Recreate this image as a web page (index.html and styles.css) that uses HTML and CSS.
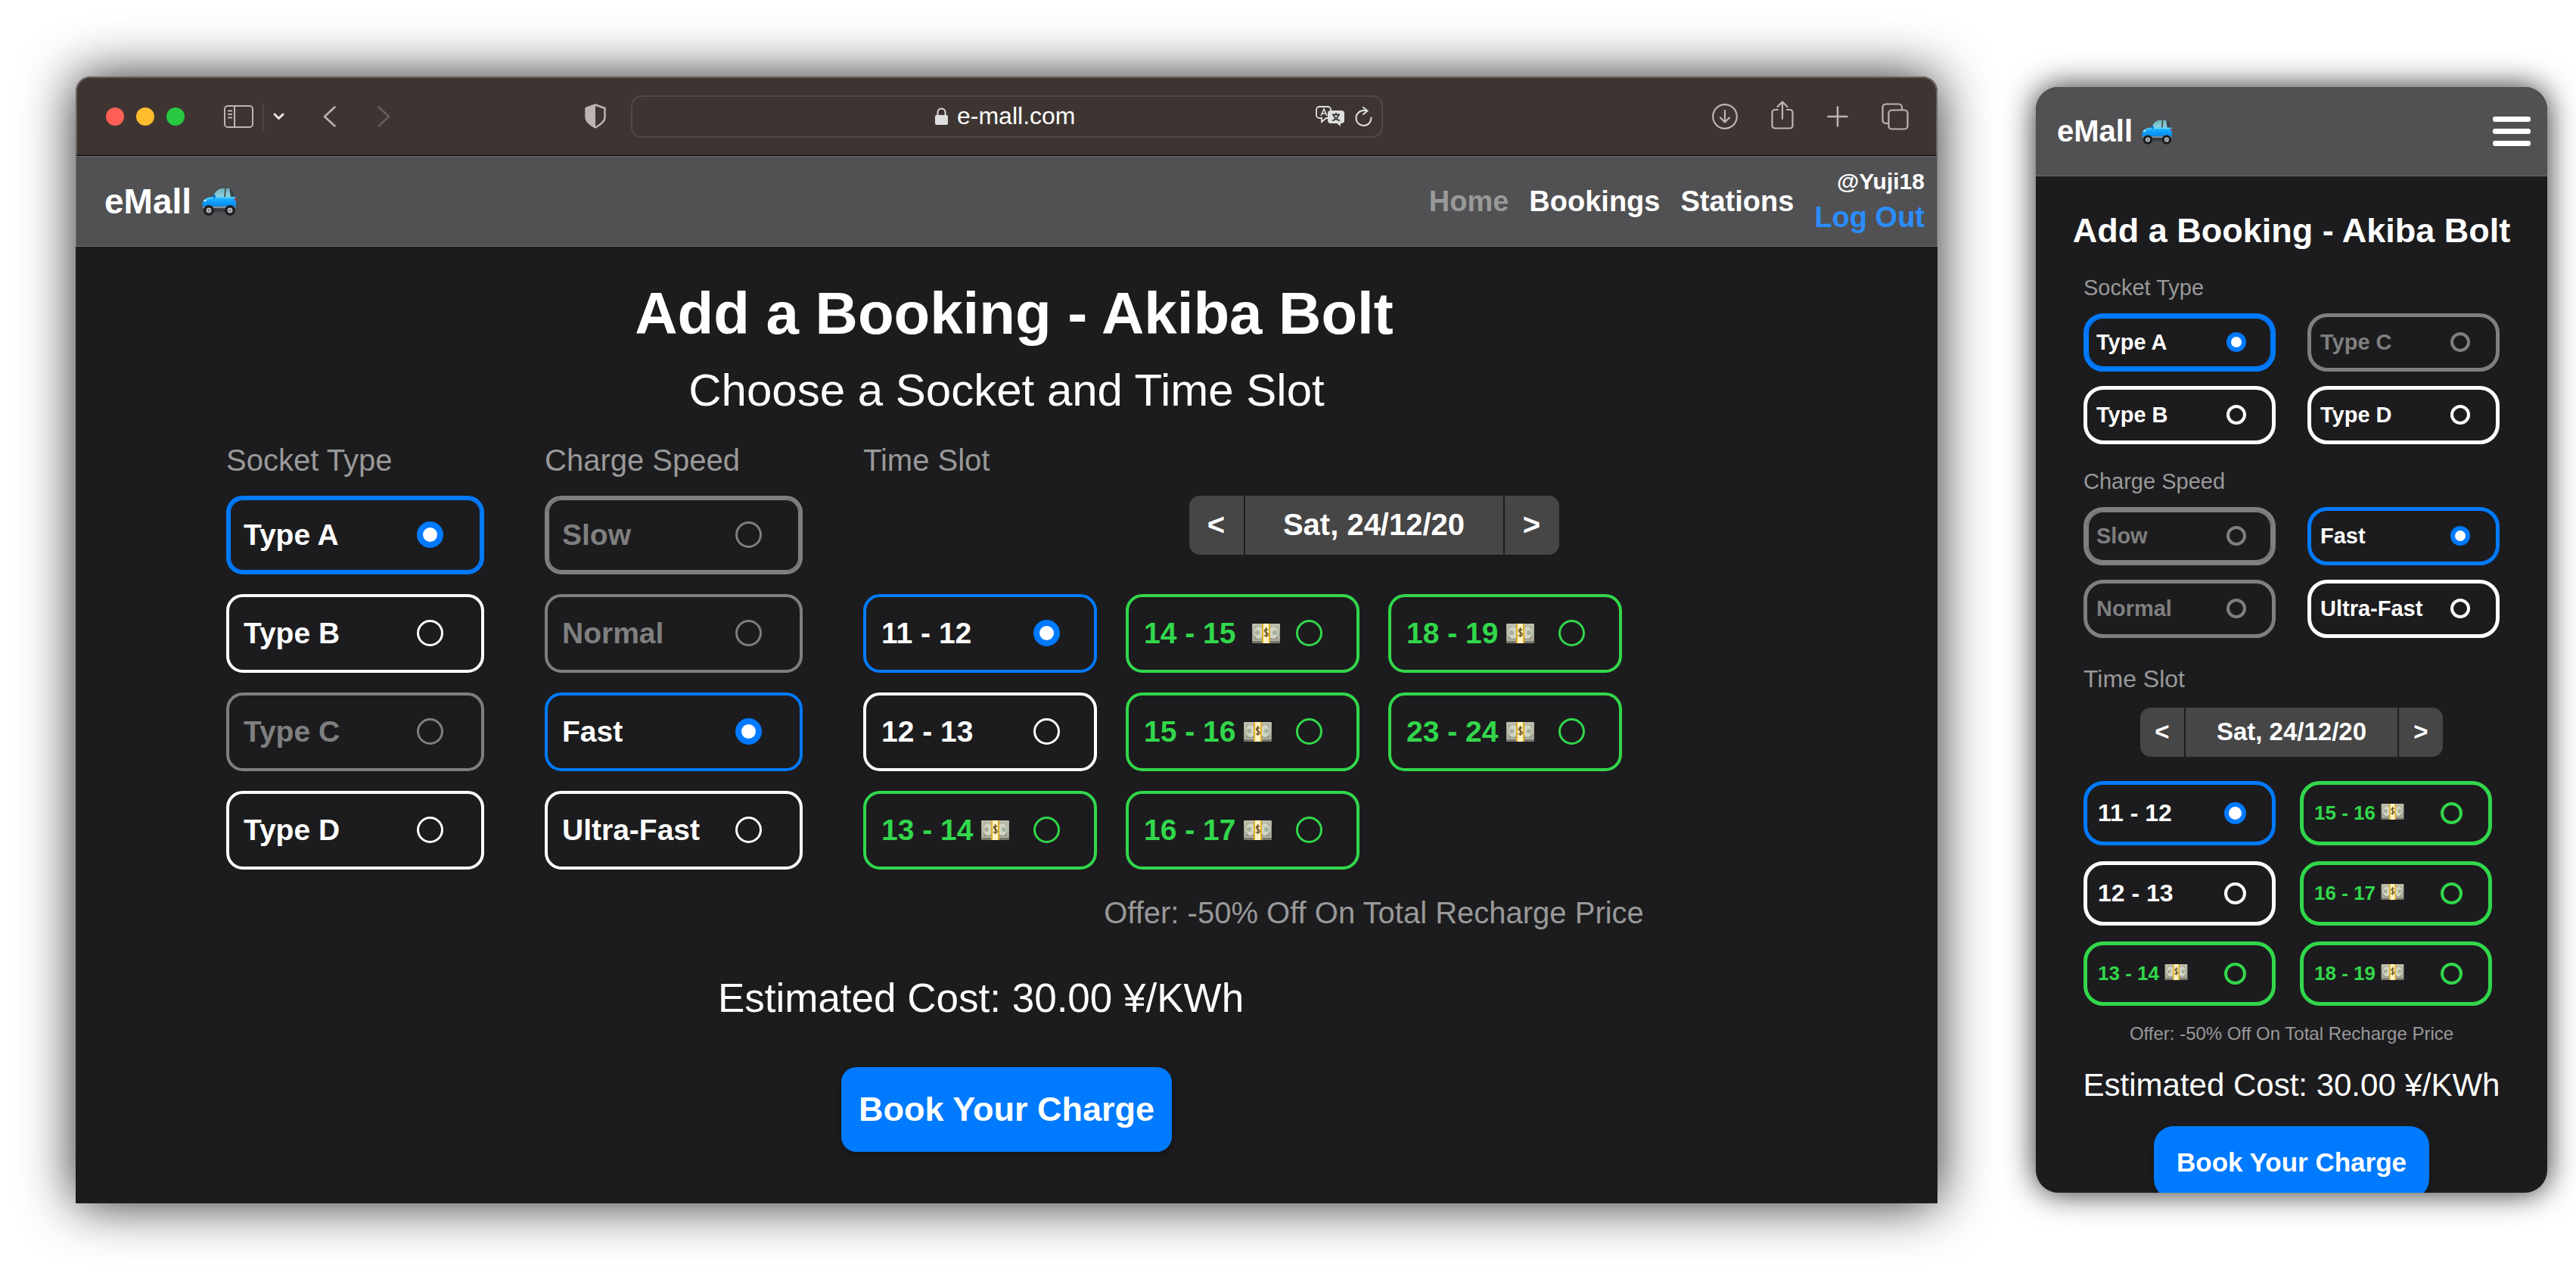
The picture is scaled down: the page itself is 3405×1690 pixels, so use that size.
FILE: index.html
```html
<!DOCTYPE html>
<html lang="en">
<head>
<meta charset="utf-8">
<title>eMall - Add a Booking</title>
<meta name="viewport" content="width=device-width, initial-scale=1">
<link rel="stylesheet" href="styles.css">
</head>
<body>
<svg class="sprite" aria-hidden="true">
  <defs>
    <linearGradient id="paint" x1="0" y1="0" x2="0" y2="1">
      <stop offset="0" stop-color="#2cbcff"/><stop offset="0.5" stop-color="#0a9dff"/><stop offset="1" stop-color="#1683d8"/>
    </linearGradient>
    <linearGradient id="glass" x1="0" y1="0" x2="0" y2="1">
      <stop offset="0" stop-color="#6fb4c0"/><stop offset="1" stop-color="#8fd6e0"/>
    </linearGradient>
    <linearGradient id="bill" x1="0" y1="0" x2="0" y2="1">
      <stop offset="0" stop-color="#b5b5a5"/><stop offset="1" stop-color="#8d8d80"/>
    </linearGradient>
  </defs>
  <symbol id="car" viewBox="0 0 45 39">
    <path d="M3 28h40l1 6H1z" fill="#3a3d40"/>
    <path d="M11 16C15 8 19 1 27 1h9c5 0 7 5 8 14z" fill="#4b4f53"/>
    <path d="M14 15C17 8 21 3 27 3h3l-1 12z" fill="url(#glass)"/>
    <path d="M32 3h4l2 12h-7z" fill="url(#glass)"/>
    <path d="M38 4c2 2 3 6 3 10h-2z" fill="#2c3b44"/>
    <path d="M1 21c1-4 6-6 12-7h30c2 0 2 2 2 4v10H1c-1-2-1-5 0-7z" fill="url(#paint)"/>
    <path d="M3 20c1-3 5-4 11-5h28" fill="none" stroke="#7fdcff"/>
    <rect x="14" y="11" width="4" height="5" rx="2" fill="#0a78d0"/>
    <ellipse cx="4" cy="19" rx="2" ry="1" fill="#e9f8ff"/>
    <rect x="43" y="16" width="2" height="3" fill="#d8232e"/>
    <path d="M1 28h43" stroke="#8a9096" stroke-width="2"/>
    <circle cx="9" cy="32" r="7" fill="#1d1e20"/><circle cx="9" cy="32" r="3.4" fill="#b9bbbd"/><circle cx="9" cy="32" r="1.4" fill="#6b6e70"/>
    <circle cx="37" cy="32" r="7" fill="#1d1e20"/><circle cx="37" cy="32" r="3.4" fill="#b9bbbd"/><circle cx="37" cy="32" r="1.4" fill="#6b6e70"/>
  </symbol>
  <symbol id="cash" viewBox="0 0 37 26">
    <rect width="37" height="26" rx="1" fill="url(#bill)"/>
    <rect x="2" y="2" width="33" height="20" fill="none" stroke="#cfcfbf"/>
    <ellipse cx="9" cy="12" rx="6" ry="8" fill="#d3d5c2"/><ellipse cx="28" cy="12" rx="6" ry="8" fill="#d3d5c2"/>
    <circle cx="7" cy="12" r="3" fill="#a9ad9a"/><circle cx="30" cy="12" r="3" fill="#9fb19a"/>
    <path d="M0 23h37v3H0z" fill="#77776c"/>
    <path d="M13 0h11v26H13z" fill="#fff3c4"/>
    <path d="M13 0h2v26h-2zM22 0h2v26h-2z" fill="#e0b02c"/>
    <path d="M21 8.500c-1-1.500-4.500-1.500-4.500 1 0 2.800 4.500 1.800 4.500 4.700 0 2.600-4 2.600-5 .8M18.600 5v13" fill="none" stroke="#6a5424" stroke-width="1.500"/>
  </symbol>
</svg>

<main class="stage">
  <section class="browser" aria-label="Desktop">
    <div class="toolbar">
      <div class="tools tools-left">
        <div class="lights"><span class="light red"></span><span class="light amber"></span><span class="light green"></span></div>
        <div class="side">
          <svg width="39" height="30" viewBox="0 0 39 30" fill="none" stroke="#bfb4b1" stroke-width="2"><rect x="1" y="1" width="37" height="28" rx="4"/><path d="M14 1v28M5 7.500h6M5 12h6M5 16.500h6"/></svg>
          <span class="rule"></span>
          <svg width="15" height="10" viewBox="0 0 15 10" fill="none" stroke="#eee6e4" stroke-width="3" stroke-linecap="round" stroke-linejoin="round"><path d="M2 2l5.500 5.500L13 2"/></svg>
        </div>
        <div class="history">
          <svg width="17" height="28" viewBox="0 0 17 28" fill="none" stroke="#bfb4b1" stroke-width="2.500" stroke-linecap="round" stroke-linejoin="round"><path d="M15.500 1.500L2 14l13.500 12.500"/></svg>
          <svg width="17" height="28" viewBox="0 0 17 28" fill="none" stroke="#675d5a" stroke-width="2.500" stroke-linecap="round" stroke-linejoin="round"><path d="M1.500 1.500L15 14 1.500 26.500"/></svg>
        </div>
        <svg class="shield" width="28" height="33" viewBox="0 0 28 33"><path d="M14 1.500L26.500 6v12c0 6-6 10-12.500 13.500C7.500 28 1.500 24 1.500 18V6z" fill="none" stroke="#bfb4b1" stroke-width="2.500" stroke-linejoin="round"/><path d="M14 1v31C7 28 1 24 1 18V6z" fill="#bfb4b1"/></svg>
      </div>
      <div class="address">
        <span></span>
        <div class="location">
          <svg width="17" height="23" viewBox="0 0 17 23"><rect y="10" width="17" height="13" rx="2" fill="#dedede"/><path d="M3.500 11V6.500a5 5 0 0 1 10 0V11" fill="none" stroke="#dedede" stroke-width="2"/></svg>
          <input class="url" type="text" value="e-mall.com" aria-label="Address">
        </div>
        <div class="page-tools">
          <svg width="38" height="27" viewBox="0 0 38 27"><path d="M17 16h-3l-6 5v-5H5a4 4 0 0 1-4-4V5a4 4 0 0 1 4-4h11a4 4 0 0 1 4 4v3" fill="none" stroke="#dedede" stroke-width="1.800"/><path d="M7 13l4-9 4 9M8.500 10h5" fill="none" stroke="#dedede" stroke-width="1.600"/><path d="M20 6h14a4 4 0 0 1 4 4v9a4 4 0 0 1-4 4h-1v4l-5-4h-8a4 4 0 0 1-4-4v-9a4 4 0 0 1 4-4z" fill="#dedede"/><path d="M22 11.500h10M27 9v2.500M30.500 11.500c-1 4-4 6.500-8.500 8M23.500 11.500c1 4 4 6.500 8.500 8" fill="none" stroke="#3e3532" stroke-width="1.800"/></svg>
          <svg width="23" height="26" viewBox="0 0 23 26" fill="none" stroke="#dedede" stroke-width="2" stroke-linecap="round"><path d="M21.500 14.500A10 10 0 1 1 11.500 5h4.500M11 1l5.500 4.500L11 10"/></svg>
        </div>
      </div>
      <div class="tools tools-right">
        <svg width="34" height="34" viewBox="0 0 34 34" fill="none" stroke="#bfb4b1" stroke-width="2.200" stroke-linecap="round" stroke-linejoin="round"><circle cx="17" cy="17" r="15.800"/><path d="M17 9v15M11 18.500l6 6 6-6"/></svg>
        <svg class="share" width="30" height="38" viewBox="0 0 30 38" fill="none" stroke="#bfb4b1" stroke-width="2.200" stroke-linecap="round" stroke-linejoin="round"><path d="M9 12H5a3.500 3.500 0 0 0-3.500 3.500V33A3.500 3.500 0 0 0 5 36.500h20a3.500 3.500 0 0 0 3.500-3.500V15.500A3.500 3.500 0 0 0 25 12h-4M15 24V2M8.500 8L15 1.500 21.500 8"/></svg>
        <svg width="28" height="28" viewBox="0 0 28 28" fill="none" stroke="#bfb4b1" stroke-width="2.500" stroke-linecap="round"><path d="M14 1.500v25M1.500 14h25"/></svg>
        <svg width="36" height="36" viewBox="0 0 36 36" fill="none" stroke="#bfb4b1" stroke-width="2.200"><rect x="9.500" y="9.500" width="25" height="25" rx="4"/><path d="M9.500 27H6a4.500 4.500 0 0 1-4.500-4.500V6A4.500 4.500 0 0 1 6 1.500h16.500A4.500 4.500 0 0 1 27 6v3.500"/></svg>
      </div>
    </div>

    <header class="site-header">
      <a class="brand" href="#">eMall <svg class="car"><use href="#car"/></svg></a>
      <nav class="nav">
        <a class="current" href="#">Home</a>
        <a href="#">Bookings</a>
        <a href="#">Stations</a>
        <div class="user"><span class="handle">@Yuji18</span><a class="logout" href="#">Log Out</a></div>
      </nav>
    </header>

    <form class="booking">
      <h1 class="title">Add a Booking - Akiba Bolt</h1>
      <p class="subtitle">Choose a Socket and Time Slot</p>
      <div class="choices">
        <fieldset class="group">
          <legend>Socket Type</legend>
          <div class="stack">
            <label class="option picked thick">Type A<input type="radio" name="socket" checked></label>
            <label class="option">Type B<input type="radio" name="socket"></label>
            <label class="option off">Type C<input type="radio" name="socket" disabled></label>
            <label class="option">Type D<input type="radio" name="socket"></label>
          </div>
        </fieldset>
        <fieldset class="group">
          <legend>Charge Speed</legend>
          <div class="stack">
            <label class="option off thick">Slow<input type="radio" name="speed" disabled></label>
            <label class="option off">Normal<input type="radio" name="speed" disabled></label>
            <label class="option picked">Fast<input type="radio" name="speed" checked></label>
            <label class="option">Ultra-Fast<input type="radio" name="speed"></label>
          </div>
        </fieldset>
        <fieldset class="group">
          <legend>Time Slot</legend>
          <div class="picker">
            <button type="button" aria-label="Previous day">&lt;</button><output>Sat, 24/12/20</output><button type="button" aria-label="Next day">&gt;</button>
          </div>
          <div class="slots">
            <label class="option picked">11 - 12<input type="radio" name="slot" checked></label>
            <label class="option">12 - 13<input type="radio" name="slot"></label>
            <label class="option deal"><span>13 - 14 <svg class="cash"><use href="#cash"/></svg></span><input type="radio" name="slot"></label>
            <label class="option deal"><span>14 - 15&nbsp; <svg class="cash"><use href="#cash"/></svg></span><input type="radio" name="slot"></label>
            <label class="option deal"><span>15 - 16 <svg class="cash"><use href="#cash"/></svg></span><input type="radio" name="slot"></label>
            <label class="option deal"><span>16 - 17 <svg class="cash"><use href="#cash"/></svg></span><input type="radio" name="slot"></label>
            <label class="option deal"><span>18 - 19 <svg class="cash"><use href="#cash"/></svg></span><input type="radio" name="slot"></label>
            <label class="option deal"><span>23 - 24 <svg class="cash"><use href="#cash"/></svg></span><input type="radio" name="slot"></label>
          </div>
          <p class="offer">Offer: -50% Off On Total Recharge Price</p>
        </fieldset>
      </div>
      <p class="cost">Estimated Cost: 30.00 ¥/KWh</p>
      <button class="book" type="submit">Book Your Charge</button>
    </form>
  </section>

  <section class="phone" aria-label="Mobile">
    <header class="site-header">
      <a class="brand" href="#">eMall <svg class="car"><use href="#car"/></svg></a>
      <button class="burger" type="button" aria-label="Menu"><span></span><span></span><span></span></button>
    </header>
    <form class="booking">
      <h2 class="title">Add a Booking - Akiba Bolt</h2>
      <fieldset class="group">
        <legend>Socket Type</legend>
        <div class="pairs">
          <label class="option picked thick">Type A<input type="radio" name="m-socket" checked></label>
          <label class="option">Type B<input type="radio" name="m-socket"></label>
          <label class="option off">Type C<input type="radio" name="m-socket" disabled></label>
          <label class="option">Type D<input type="radio" name="m-socket"></label>
        </div>
      </fieldset>
      <fieldset class="group">
        <legend>Charge Speed</legend>
        <div class="pairs">
          <label class="option off thick">Slow<input type="radio" name="m-speed" disabled></label>
          <label class="option off">Normal<input type="radio" name="m-speed" disabled></label>
          <label class="option picked">Fast<input type="radio" name="m-speed" checked></label>
          <label class="option">Ultra-Fast<input type="radio" name="m-speed"></label>
        </div>
      </fieldset>
      <fieldset class="group time">
        <legend>Time Slot</legend>
        <div class="picker">
          <button type="button" aria-label="Previous day">&lt;</button><output>Sat, 24/12/20</output><button type="button" aria-label="Next day">&gt;</button>
        </div>
        <div class="slots">
          <label class="option picked">11 - 12<input type="radio" name="m-slot" checked></label>
          <label class="option">12 - 13<input type="radio" name="m-slot"></label>
          <label class="option deal"><span>13 - 14 <svg class="cash"><use href="#cash"/></svg></span><input type="radio" name="m-slot"></label>
          <label class="option deal"><span>15 - 16 <svg class="cash"><use href="#cash"/></svg></span><input type="radio" name="m-slot"></label>
          <label class="option deal"><span>16 - 17 <svg class="cash"><use href="#cash"/></svg></span><input type="radio" name="m-slot"></label>
          <label class="option deal"><span>18 - 19 <svg class="cash"><use href="#cash"/></svg></span><input type="radio" name="m-slot"></label>
        </div>
        <p class="offer">Offer: -50% Off On Total Recharge Price</p>
      </fieldset>
      <p class="cost">Estimated Cost: 30.00 ¥/KWh</p>
      <button class="book" type="submit">Book Your Charge</button>
    </form>
  </section>
</main>
</body>
</html>
```
FILE: styles.css
```css
* { box-sizing: border-box; }

:root {
  --ink: #1c1c1e;
  --bar: #515153;
  --chrome: #3e3532;
  --blue: #007aff;
  --green: #32d74b;
  --muted: #999;
  --off: #7f7f7f;
}

body {
  margin: 0;
  background: #fff;
  color: #fff;
  font-family: "Liberation Sans", Arial, Helvetica, sans-serif;
}

h1, h2, p { margin: 0; }
a { color: inherit; text-decoration: none; }
button, input, output { font: inherit; color: inherit; }
svg { display: block; flex: none; }
.sprite { position: absolute; width: 0; height: 0; }

.stage {
  display: flex;
  align-items: center;
  gap: 130px;
  min-height: 100vh;
  padding: 40px 38px 40px 100px;
}

/* Desktop window */
.browser {
  flex: 2461 1 0;
  min-width: 0;
  border-radius: 20px 20px 0 0;
  background: var(--ink);
  box-shadow: 0 0 70px rgba(0, 0, 0, .85);
}

.toolbar {
  display: grid;
  grid-template-columns: 1fr 994px 1fr;
  align-items: center;
  height: 105px;
  border: 2px solid #6c6461;
  border-bottom: 1px solid #000;
  border-radius: 20px 20px 0 0;
  background: var(--chrome);
}

.tools { display: flex; align-items: center; }
.tools-left { padding: 0 33px 0 38px; }
.tools-right { justify-content: flex-end; gap: 44px; padding-right: 36px; }
.tools-right .share { margin-bottom: 4px; }

.lights { display: flex; gap: 16px; margin-right: 52px; }
.light { width: 24px; height: 24px; border-radius: 50%; }
.red { background: #ff5f57; }
.amber { background: #febc2e; }
.green { background: #28c840; }
.side { display: flex; align-items: center; gap: 12px; margin-right: 51px; }
.rule { width: 2px; height: 36px; background: #4e4542; }
.history { display: flex; gap: 55px; }
.shield { margin-left: auto; }

.address {
  display: grid;
  grid-template-columns: 1fr auto 1fr;
  align-items: center;
  height: 56px;
  padding: 0 12px;
  border: 2px solid #514945;
  border-radius: 14px;
}
.location { display: flex; align-items: center; gap: 12px; }
.url {
  width: 160px;
  height: 40px;
  padding: 0;
  border: 0;
  background: none;
  font-size: 32px;
}
.page-tools { display: flex; justify-content: flex-end; align-items: center; gap: 14px; }

.site-header {
  display: flex;
  justify-content: space-between;
  align-items: center;
  height: 120px;
  padding: 0 16px 0 37px;
  border: 1px solid #6c6c6e;
  background: var(--bar);
}
.brand { display: flex; align-items: center; gap: 14px; font-size: 46px; font-weight: 700; line-height: 50px; }
.car { width: 45px; height: 39px; }
.nav { display: flex; align-items: center; gap: 27px; font-size: 38px; font-weight: 700; line-height: 44px; }
.current { color: var(--muted); }
.user { display: flex; flex-direction: column; align-items: flex-end; gap: 8px; }
.handle { font-size: 30px; line-height: 34px; }
.logout { color: #2b8dff; }

.booking { display: flex; flex-direction: column; align-items: center; }
.browser .booking { padding: 43px 70px 68px 199px; }
.title { font-weight: 700; white-space: nowrap; }
.browser .title { margin-right: 109px; font-size: 78px; line-height: 90px; }
.subtitle { margin-top: 23px; font-size: 60px; line-height: 68px; }
.subtitle, .browser .cost, .browser .book { margin-right: 129px; }

.choices {
  display: grid;
  grid-template-columns: 341px 341px 1fr;
  gap: 80px;
  align-self: stretch;
  margin-top: 36px;
}
.group { min-width: 0; margin: 0; padding: 0; border: 0; }
.group legend { padding: 0; color: var(--muted); font-size: 40px; line-height: 44px; }
.stack { display: grid; grid-auto-rows: 104px; gap: 26px; margin-top: 25px; }

.option {
  display: flex;
  justify-content: space-between;
  align-items: center;
  padding: 0 50px 0 19px;
  border: 4px solid currentColor;
  border-radius: 22px;
  font-size: 39px;
  font-weight: 700;
  white-space: nowrap;
}
.option input {
  appearance: none;
  flex: none;
  width: 35px;
  height: 35px;
  margin: 0;
  border: 3px solid currentColor;
  border-radius: 50%;
}
.option.picked { border-color: var(--blue); }
.option.picked input { border: 8px solid var(--blue); background: #fff; }
.option.off { color: var(--off); }
.option.deal { color: var(--green); }
.option.thick { box-shadow: inset 0 0 0 2px var(--off); }
.option.picked.thick { box-shadow: inset 0 0 0 2px var(--blue); }
.cash { display: inline-block; width: 37px; height: 26px; }

.picker {
  display: flex;
  justify-content: center;
  gap: 2px;
  width: max-content;
  height: 78px;
  margin: 25px auto 52px;
  border-radius: 14px;
  overflow: hidden;
  font-size: 40px;
  font-weight: 700;
}
.picker button, .picker output {
  display: flex;
  justify-content: center;
  align-items: center;
  padding: 0;
  border: 0;
  background: #464646;
}
.picker button { width: 72px; }
.picker output { width: 341px; }

.slots {
  display: grid;
  grid-template-rows: repeat(3, 104px);
  grid-auto-flow: column;
  grid-auto-columns: 309px;
  gap: 26px 38px;
}
.slots .option { padding: 0 45px 0 20px; }
.offer { margin-top: 35px; color: var(--muted); font-size: 40px; line-height: 44px; text-align: center; }
.cost { line-height: 60px; white-space: nowrap; }
.browser .cost { margin-top: 61px; padding-right: 68px; font-size: 53px; }
.book {
  border: 0;
  background: var(--blue);
  font-weight: 700;
  white-space: nowrap;
  box-shadow: 0 4px 12px rgba(0, 0, 0, .3);
}
.browser .book { margin-top: 61px; width: 437px; height: 112px; border-radius: 20px; font-size: 45px; }

/* Phone */
.phone {
  flex: 676 1 0;
  min-width: 0;
  aspect-ratio: 676 / 1461;
  border-radius: 30px;
  overflow: hidden;
  background: var(--ink);
  box-shadow: 0 0 40px rgba(0, 0, 0, .85);
}
.phone .site-header { height: 118px; padding: 0 22px 0 28px; border-width: 0 0 1px; }
.phone .brand { gap: 12px; font-size: 40px; }
.phone .car { width: 40px; height: 35px; }
.burger { display: flex; flex-direction: column; gap: 9px; padding: 0; border: 0; background: none; }
.burger span { width: 50px; height: 7px; border-radius: 3px; background: #fff; }

.phone .title { margin-top: 46px; font-size: 45px; line-height: 52px; }
.phone .group { width: 550px; margin-top: 32px; }
.phone .group legend { font-size: 29px; line-height: 34px; }
.phone .group.time { margin-top: 36px; }
.phone .time legend { font-size: 32px; line-height: 36px; }
.pairs {
  display: grid;
  grid-template-rows: repeat(2, 77px);
  grid-auto-flow: column;
  grid-auto-columns: 254px;
  gap: 19px 42px;
  margin-top: 17px;
}
.phone .option { padding: 0 34px 0 12px; border-width: 5px; border-radius: 26px; font-size: 29px; }
.phone .option input { width: 26px; height: 26px; border-width: 4px; }
.phone .option.picked input { border-width: 6px; }
.phone .picker { height: 65px; margin: 20px auto 32px; font-size: 33px; }
.phone .picker button { width: 58px; }
.phone .picker output { width: 280px; }
.phone .slots { grid-template-rows: repeat(3, 85px); grid-auto-columns: 254px; gap: 21px 32px; }
.phone .slots .option { padding-left: 14px; font-size: 32px; }
.phone .slots .option.deal { font-size: 26px; }
.phone .slots input { width: 29px; height: 29px; }
.phone .slots .cash { width: 31px; height: 21px; }
.phone .offer { margin-top: 23px; font-size: 24px; line-height: 28px; }
.phone .cost { margin-top: 30px; font-size: 42px; line-height: 48px; }
.phone .book { flex: none; margin-top: 30px; width: 364px; height: 96px; border-radius: 26px; font-size: 35px; }
```
